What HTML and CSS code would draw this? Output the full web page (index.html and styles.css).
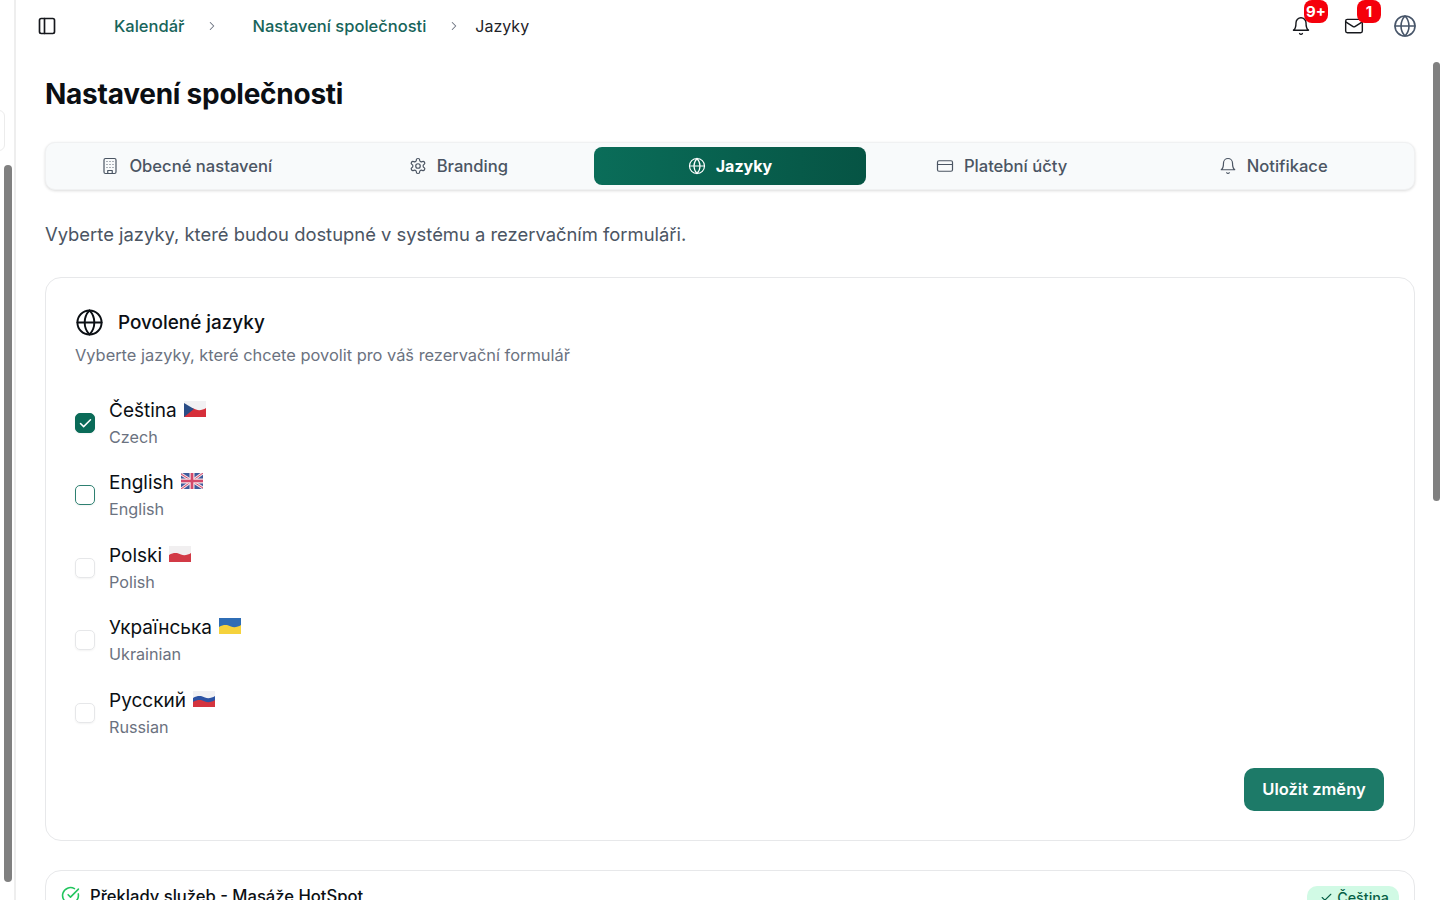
FILE: index.html
```html
<!doctype html>
<html lang="cs">
  <head>
    <meta charset="UTF-8" />
    <title>Nastavení společnosti</title>
    <link rel="stylesheet" href="styles.css">
  </head>
  <body>
    <svg class="sprite" aria-hidden="true">
      <defs>
        <clipPath id="flagShape">
          <path d="M0 3C5 0 9 1 12 2.5S19 3 22 1V13C17 15 14 15 10 13.5S4 13 0 15Z" />
        </clipPath>
      </defs>
      <symbol id="i-panel" viewBox="0 0 24 24"><rect x="3" y="3" width="18" height="18" rx="2" /><path d="M9 3v18" /></symbol>
      <symbol id="i-chevron" viewBox="0 0 24 24"><path d="m9 18 6-6-6-6" /></symbol>
      <symbol id="i-building" viewBox="0 0 24 24"><rect x="4" y="2" width="16" height="20" rx="2" /><path d="M9 22v-4h6v4M8 6h.01M16 6h.01M12 6h.01M12 10h.01M12 14h.01M16 10h.01M16 14h.01M8 10h.01M8 14h.01" /></symbol>
      <symbol id="i-settings" viewBox="0 0 24 24"><path d="M12.22 2h-.44a2 2 0 0 0-2 2v.18a2 2 0 0 1-1 1.73l-.43.25a2 2 0 0 1-2 0l-.15-.08a2 2 0 0 0-2.73.73l-.22.38a2 2 0 0 0 .73 2.73l.15.1a2 2 0 0 1 1 1.72v.51a2 2 0 0 1-1 1.74l-.15.09a2 2 0 0 0-.73 2.73l.22.38a2 2 0 0 0 2.73.73l.15-.08a2 2 0 0 1 2 0l.43.25a2 2 0 0 1 1 1.73V20a2 2 0 0 0 2 2h.44a2 2 0 0 0 2-2v-.18a2 2 0 0 1 1-1.73l.43-.25a2 2 0 0 1 2 0l.15.08a2 2 0 0 0 2.73-.73l.22-.39a2 2 0 0 0-.73-2.73l-.15-.08a2 2 0 0 1-1-1.74v-.5a2 2 0 0 1 1-1.74l.15-.09a2 2 0 0 0 .73-2.73l-.22-.38a2 2 0 0 0-2.73-.73l-.15.08a2 2 0 0 1-2 0l-.43-.25a2 2 0 0 1-1-1.73V4a2 2 0 0 0-2-2z" /><circle cx="12" cy="12" r="3" /></symbol>
      <symbol id="i-globe" viewBox="0 0 24 24"><circle cx="12" cy="12" r="10" /><path d="M12 2a14.5 14.5 0 0 0 0 20 14.5 14.5 0 0 0 0-20M2 12h20" /></symbol>
      <symbol id="i-card" viewBox="0 0 24 24"><rect x="2" y="5" width="20" height="14" rx="2" /><path d="M2 10h20" /></symbol>
      <symbol id="i-bell" viewBox="0 0 24 24"><path d="M6 8a6 6 0 0 1 12 0c0 7 3 9 3 9H3s3-2 3-9M10.3 21a1.94 1.94 0 0 0 3.4 0" /></symbol>
      <symbol id="i-mail" viewBox="0 0 24 24"><rect x="2" y="4" width="20" height="16" rx="2" /><path d="m22 7-8.97 5.7a1.94 1.94 0 0 1-2.06 0L2 7" /></symbol>
      <symbol id="i-check" viewBox="0 0 24 24"><path d="M20 6 9 17l-5-5" /></symbol>
      <symbol id="i-check-circle" viewBox="0 0 24 24"><path d="M21.801 10A10 10 0 1 1 17 3.335" /><path d="m9 11 3 3L22 4" /></symbol>
    </svg>

    <div class="app-container">
      <aside class="sidebar">
        <div class="sidebar-stub"></div>
        <div class="sidebar-thumb"></div>
      </aside>

      <main class="main">
        <div class="page-thumb"></div>

        <header class="topbar">
          <svg class="icon topbar-toggle"><use href="#i-panel" /></svg>
          <nav class="breadcrumb">
            <a class="crumb-link">Kalendář</a>
            <svg class="icon crumb-sep crumb-sep-wide"><use href="#i-chevron" /></svg>
            <a class="crumb-link">Nastavení společnosti</a>
            <svg class="icon crumb-sep"><use href="#i-chevron" /></svg>
            <span class="crumb-current">Jazyky</span>
          </nav>
          <div class="topbar-actions">
            <div class="action action-bell">
              <svg class="icon"><use href="#i-bell" /></svg>
              <span class="badge">9+</span>
            </div>
            <div class="action action-mail">
              <svg class="icon"><use href="#i-mail" /></svg>
              <span class="badge">1</span>
            </div>
            <svg class="icon action-globe"><use href="#i-globe" /></svg>
          </div>
        </header>

        <div class="content">
          <h1 class="page-title">Nastavení společnosti</h1>

          <div class="tabs">
            <div class="tab"><svg class="icon"><use href="#i-building" /></svg>Obecné nastavení</div>
            <div class="tab"><svg class="icon"><use href="#i-settings" /></svg>Branding</div>
            <div class="tab tab-active"><svg class="icon"><use href="#i-globe" /></svg>Jazyky</div>
            <div class="tab"><svg class="icon"><use href="#i-card" /></svg>Platební účty</div>
            <div class="tab"><svg class="icon"><use href="#i-bell" /></svg>Notifikace</div>
          </div>

          <p class="intro">Vyberte jazyky, které budou dostupné v systému a rezervačním formuláři.</p>

          <section class="panel">
            <div class="panel-heading">
              <svg class="icon"><use href="#i-globe" /></svg>
              <h2>Povolené jazyky</h2>
            </div>
            <p class="panel-sub">Vyberte jazyky, které chcete povolit pro váš rezervační formulář</p>

            <div class="lang-list">
              <label class="lang">
                <span class="check check-on"><svg class="icon"><use href="#i-check" /></svg></span>
                <span class="lang-text">
                  <span class="lang-name">Čeština
                    <svg class="flag" viewBox="0 0 22 16"><g clip-path="url(#flagShape)"><rect width="22" height="16" fill="#f1f1f3" /><path d="M0 9C5 6 9 7 12 8.5S19 9 22 7V16H0Z" fill="#d62f3a" /><path d="M0 2 10 8 0 16Z" fill="#2a4d86" /></g></svg>
                  </span>
                  <span class="lang-en">Czech</span>
                </span>
              </label>
              <label class="lang">
                <span class="check check-focus"></span>
                <span class="lang-text">
                  <span class="lang-name">English
                    <svg class="flag" viewBox="0 0 22 16"><g clip-path="url(#flagShape)"><rect width="22" height="16" fill="#3d5a9c" /><path d="M0 1 22 15M22 0 0 16" stroke="#f3dfe4" stroke-width="3" /><path d="M0 1 22 15M22 0 0 16" stroke="#d3486a" stroke-width="1" /><path d="M11 0V16M0 8H22" stroke="#f3dfe4" stroke-width="5" /><path d="M11 0V16M0 8H22" stroke="#d3486a" stroke-width="2.6" /></g></svg>
                  </span>
                  <span class="lang-en">English</span>
                </span>
              </label>
              <label class="lang">
                <span class="check"></span>
                <span class="lang-text">
                  <span class="lang-name">Polski
                    <svg class="flag" viewBox="0 0 22 16"><g clip-path="url(#flagShape)"><rect width="22" height="16" fill="#f1eff0" /><path d="M0 9C5 6 9 7 12 8.5S19 9 22 7V16H0Z" fill="#d23a46" /></g></svg>
                  </span>
                  <span class="lang-en">Polish</span>
                </span>
              </label>
              <label class="lang">
                <span class="check"></span>
                <span class="lang-text">
                  <span class="lang-name">Українська
                    <svg class="flag" viewBox="0 0 22 16"><g clip-path="url(#flagShape)"><rect width="22" height="16" fill="#2f6db5" /><path d="M0 9C5 6 9 7 12 8.5S19 9 22 7V16H0Z" fill="#f5d23c" /></g></svg>
                  </span>
                  <span class="lang-en">Ukrainian</span>
                </span>
              </label>
              <label class="lang">
                <span class="check"></span>
                <span class="lang-text">
                  <span class="lang-name">Русский
                    <svg class="flag" viewBox="0 0 22 16"><g clip-path="url(#flagShape)"><rect width="22" height="16" fill="#f1f1f4" /><path d="M0 7C5 4 9 5 12 6.5S19 7 22 5V16H0Z" fill="#2c53a4" /><path d="M0 11C5 8 9 9 12 10.5S19 11 22 9V16H0Z" fill="#d4343f" /></g></svg>
                  </span>
                  <span class="lang-en">Russian</span>
                </span>
              </label>
            </div>

            <div class="panel-actions">
              <button class="btn-save">Uložit změny</button>
            </div>
          </section>

          <section class="panel panel-service">
            <div class="service-title">
              <svg class="icon"><use href="#i-check-circle" /></svg>
              <span>Překlady služeb - Masáže HotSpot</span>
            </div>
            <span class="chip"><svg class="icon"><use href="#i-check" /></svg>Čeština</span>
          </section>
        </div>
      </main>
    </div>
  </body>
</html>
```

FILE: styles.css
```css
:root {
  --green: #0a6b58;
  --green-dark: #064e40;
  --link: #17645a;
  --text: #0b0f14;
  --muted: #6b7280;
  --line: #e7e8ea;
}

* {
  margin: 0;
  padding: 0;
  box-sizing: border-box;
}

html,
body {
  height: 100%;
  overflow: hidden;
}

body {
  font-family: "Inter", "Noto Sans", sans-serif;
  background-color: white;
  color: var(--text);
}

.sprite {
  display: none;
}

.icon {
  width: 16px;
  height: 16px;
  flex: none;
  fill: none;
  stroke: currentColor;
  stroke-width: 2;
  stroke-linecap: round;
  stroke-linejoin: round;
}

.app-container {
  display: flex;
  height: 900px;
}

/* collapsed sidebar strip */
.sidebar {
  position: relative;
  width: 16px;
  flex: none;
  border-right: 2px solid #eeeeee;
}

.sidebar-stub {
  position: absolute;
  left: -10px;
  top: 110px;
  width: 15px;
  height: 41px;
  border: 1px solid #ececec;
  border-radius: 6px;
}

.sidebar-thumb {
  position: absolute;
  left: 4px;
  top: 165px;
  width: 8px;
  height: 717px;
  background-color: #808080;
  border-radius: 4px;
}

.main {
  position: relative;
  flex: 1;
  min-width: 0;
}

.page-thumb {
  position: absolute;
  right: 0;
  top: 62px;
  width: 7px;
  height: 439px;
  background-color: #808080;
  border-radius: 4px;
}

.topbar {
  display: flex;
  align-items: center;
  height: 52px;
  padding: 0 23px 0 21px;
}

.topbar-toggle {
  width: 20px;
  height: 20px;
  color: #16181d;
}

.breadcrumb {
  display: flex;
  align-items: center;
  margin-left: 57px;
  font-size: 16px;
  line-height: 24px;
}

.crumb-link {
  color: var(--link);
  font-size: 16.5px;
  font-weight: 500;
}

.crumb-current {
  color: #1f2328;
}

.crumb-sep {
  width: 14px;
  height: 14px;
  margin: 0 14px 0 21px;
  color: #6b7280;
  stroke-width: 1.8;
}

.crumb-sep-wide {
  margin: 0 33px 0 21px;
}

.topbar-actions {
  display: flex;
  align-items: center;
  margin-left: auto;
}

.action {
  position: relative;
  display: flex;
  color: #16181d;
}

.action .icon {
  width: 20px;
  height: 20px;
  stroke-width: 1.7;
}

.action-mail {
  margin-left: 33px;
}

.badge {
  position: absolute;
  left: 13px;
  top: -16px;
  min-width: 24px;
  height: 23px;
  padding: 0 2px;
  border-radius: 8px;
  background-color: #f5000b;
  color: white;
  font-size: 15px;
  font-weight: 700;
  line-height: 23px;
  text-align: center;
}

.action-globe {
  width: 24px;
  height: 24px;
  margin-left: 29px;
  color: #475569;
  stroke-width: 1.6;
}

.content {
  padding: 0 25px 0 29px;
}

.page-title {
  margin-top: 23px;
  font-size: 28px;
  font-weight: 700;
  line-height: 38px;
  letter-spacing: -0.25px;
}

.tabs {
  display: grid;
  grid-template-columns: repeat(5, 1fr);
  margin-top: 29px;
  padding: 4px 5px;
  border: 1px solid #f0f1f2;
  border-radius: 10px;
  background-color: #f8fafb;
  box-shadow: 0 1px 3px rgba(0, 0, 0, 0.14);
}

.tab {
  display: flex;
  align-items: center;
  justify-content: center;
  gap: 10px;
  height: 38px;
  border-radius: 8px;
  color: #4b5563;
  font-size: 16.6px;
  font-weight: 500;
}

.tab .icon {
  width: 18px;
  height: 18px;
  stroke-width: 1.6;
}

.tab-active {
  background: linear-gradient(90deg, #0a6d59, #065444);
  color: white;
  font-size: 16px;
  font-weight: 700;
}

.intro {
  margin-top: 31px;
  color: #4b5563;
  font-size: 18.4px;
  line-height: 26px;
}

.panel {
  margin-top: 30px;
  padding: 30px 30px 29px 29px;
  border: 1px solid var(--line);
  border-radius: 16px;
}

.panel-heading {
  display: flex;
  align-items: center;
  gap: 14px;
}

.panel-heading .icon {
  width: 29px;
  height: 29px;
  stroke-width: 1.6;
}

.panel-heading h2 {
  font-size: 18.9px;
  font-weight: 500;
  line-height: 28px;
}

.panel-sub {
  margin-top: 6px;
  color: var(--muted);
  font-size: 16.4px;
  line-height: 24px;
}

.lang-list {
  display: flex;
  flex-direction: column;
  gap: 22.4px;
  margin-top: 32px;
}

.lang {
  display: flex;
  align-items: center;
  gap: 14px;
}

.lang-text {
  display: flex;
  flex-direction: column;
  gap: 2px;
}

.lang-name {
  display: flex;
  align-items: center;
  gap: 7px;
  font-size: 19px;
  line-height: 24px;
}

.lang-en {
  color: var(--muted);
  font-size: 16.2px;
  line-height: 24px;
}

.check {
  display: flex;
  align-items: center;
  justify-content: center;
  width: 20px;
  height: 20px;
  margin-bottom: 2px;
  border: 1px solid #e6e7e9;
  border-radius: 5px;
  box-shadow: 0 1px 2px rgba(0, 0, 0, 0.05);
}

.check-on {
  border-color: var(--green);
  background-color: var(--green);
  color: white;
}

.check-on .icon {
  width: 15px;
  height: 15px;
  stroke-width: 2.4;
}

.check-focus {
  border: 1.5px solid #2e8071;
}

.flag {
  width: 22px;
  height: 16px;
  flex: none;
  margin-top: -4px;
}

.panel-actions {
  display: flex;
  justify-content: flex-end;
  margin-top: 29px;
}

.btn-save {
  width: 140px;
  height: 43px;
  border: none;
  border-radius: 10px;
  background-color: #1d7a68;
  color: white;
  font-family: inherit;
  font-size: 16.5px;
  font-weight: 600;
}

.panel-service {
  display: flex;
  justify-content: space-between;
  margin-top: 29px;
  padding: 15px;
  height: 120px;
}

.service-title {
  display: flex;
  align-items: center;
  gap: 10px;
  height: 20px;
  margin-top: 0;
  font-size: 16.6px;
  font-weight: 500;
}

.service-title .icon {
  width: 19px;
  height: 19px;
  color: #22c55e;
}

.chip {
  display: flex;
  align-items: center;
  gap: 4px;
  height: 24px;
  padding: 0 10px 0 13px;
  border-radius: 10px;
  background-color: #d1fae5;
  color: #065f46;
  font-size: 14.3px;
  font-weight: 500;
}

.chip .icon {
  width: 13px;
  height: 13px;
}
```
